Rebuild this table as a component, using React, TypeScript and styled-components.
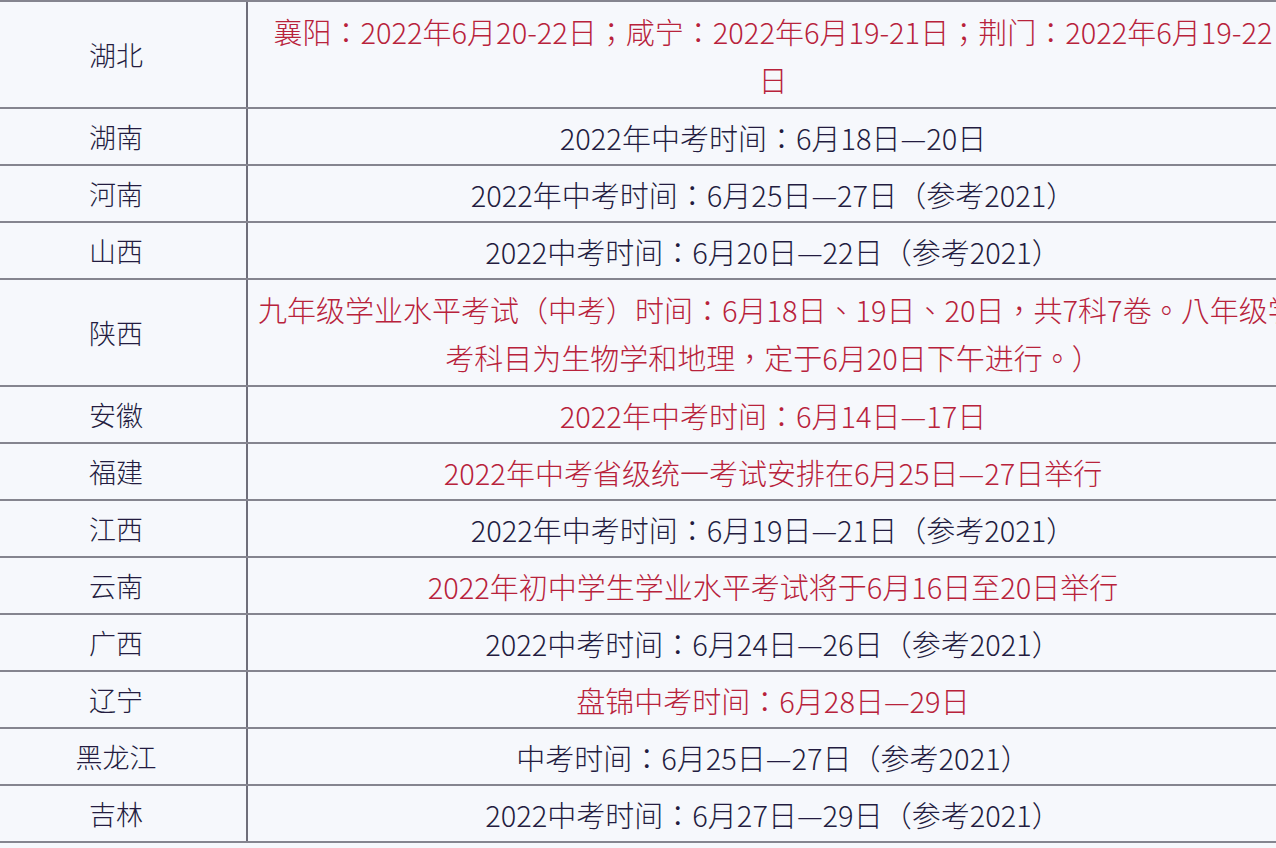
import React from 'react';
import styled, { createGlobalStyle } from 'styled-components';

interface IRow {
  province: string,
  lines: string[],
  red?: boolean,
  tall?: boolean
}

const rows: IRow[] = [
  { province: '湖北', red: true, tall: true, lines: ['襄阳：2022年6月20-22日；咸宁：2022年6月19-21日；荆门：2022年6月19-22', '日'] },
  { province: '湖南', lines: ['2022年中考时间：6月18日—20日'] },
  { province: '河南', lines: ['2022年中考时间：6月25日—27日（参考2021）'] },
  { province: '山西', lines: ['2022中考时间：6月20日—22日（参考2021）'] },
  { province: '陕西', red: true, tall: true, lines: ['九年级学业水平考试（中考）时间：6月18日、19日、20日，共7科7卷。八年级学', '考科目为生物学和地理，定于6月20日下午进行。）'] },
  { province: '安徽', red: true, lines: ['2022年中考时间：6月14日—17日'] },
  { province: '福建', red: true, lines: ['2022年中考省级统一考试安排在6月25日—27日举行'] },
  { province: '江西', lines: ['2022年中考时间：6月19日—21日（参考2021）'] },
  { province: '云南', red: true, lines: ['2022年初中学生学业水平考试将于6月16日至20日举行'] },
  { province: '广西', lines: ['2022中考时间：6月24日—26日（参考2021）'] },
  { province: '辽宁', red: true, lines: ['盘锦中考时间：6月28日—29日'] },
  { province: '黑龙江', lines: ['中考时间：6月25日—27日（参考2021）'] },
  { province: '吉林', lines: ['2022中考时间：6月27日—29日（参考2021）'] },
];

const App = () => {
  return (
    <Page>
      <GlobalStyle />
      <Sheet>
        {rows.map(row => (
          <Row key={row.province} tall={row.tall}>
            <Province>{row.province}</Province>
            <Info red={row.red}>
              {row.lines.map((line, i) => <Line key={i}>{line}</Line>)}
            </Info>
          </Row>
        ))}
      </Sheet>
    </Page>
  )
}

export default App

const GlobalStyle = createGlobalStyle`
  html, body {
    margin: 0;
    padding: 0;
    background: #f6f8fc;
  }
  body {
    font-family: "Noto Sans CJK SC", "Noto Sans", sans-serif;
  }
`

const Page = styled.div`
  width: 1276px;
  height: 848px;
  overflow: hidden;
  background: #f6f8fc;
`

const Sheet = styled.div`
  width: 1312px;
  margin-left: -14px;
  border-top: 2px solid #85858f;
`

const Row = styled.div<{ tall?: boolean }>`
  display: grid;
  grid-template-columns: 262px 1fr;
  box-sizing: border-box;
  height: ${props => props.tall ? 107 : 57}px;
  border-bottom: 2px solid #85858f;
`

const Province = styled.div`
  display: flex;
  align-items: center;
  justify-content: center;
  border-right: 2px solid #6e6e7a;
  font-size: 27px;
  font-weight: 300;
  color: #231c40;
`

const Info = styled.div<{ red?: boolean }>`
  display: flex;
  flex-direction: column;
  justify-content: center;
  padding: 0 10px;
  font-family: "Noto Sans CJK TC", "Noto Sans CJK SC", sans-serif;
  font-size: 29px;
  font-weight: 300;
  line-height: 48px;
  color: ${props => props.red ? '#b8223b' : '#231c40'};
  overflow: hidden;
`

const Line = styled.div`
  text-align: center;
  white-space: nowrap;
`
